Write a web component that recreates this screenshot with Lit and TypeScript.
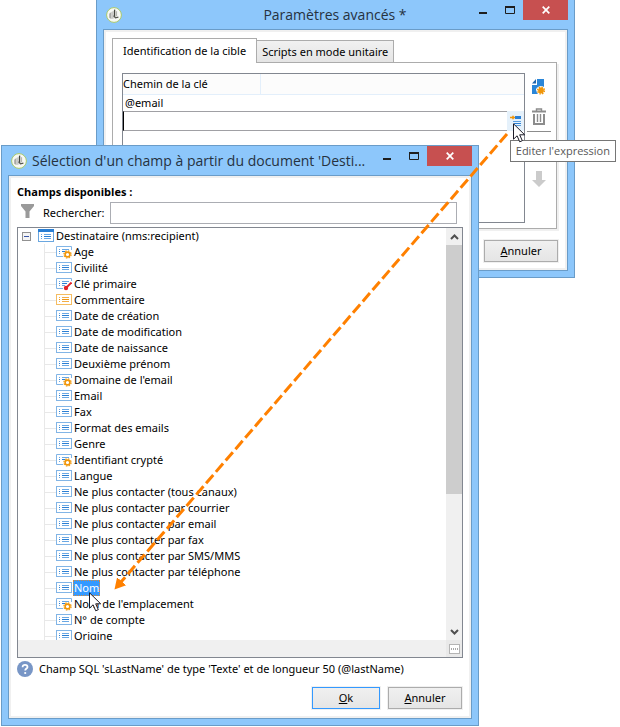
import { LitElement, html, css, svg, nothing } from "lit";
import { customElement, property } from "lit/decorators.js";
import { classMap } from "lit/directives/class-map.js";

type Kind = "field" | "computed" | "key" | "memo";

interface Field {
  label: string;
  kind?: Kind;
  selected?: boolean;
}

const FIELDS: Field[] = [
  { label: "Age", kind: "computed" },
  { label: "Civilité" },
  { label: "Clé primaire", kind: "key" },
  { label: "Commentaire", kind: "memo" },
  { label: "Date de création" },
  { label: "Date de modification" },
  { label: "Date de naissance" },
  { label: "Deuxième prénom" },
  { label: "Domaine de l'email", kind: "computed" },
  { label: "Email" },
  { label: "Fax" },
  { label: "Format des emails" },
  { label: "Genre" },
  { label: "Identifiant crypté", kind: "computed" },
  { label: "Langue" },
  { label: "Ne plus contacter (tous canaux)" },
  { label: "Ne plus contacter par courrier" },
  { label: "Ne plus contacter par email" },
  { label: "Ne plus contacter par fax" },
  { label: "Ne plus contacter par SMS/MMS" },
  { label: "Ne plus contacter par téléphone" },
  { label: "Nom", selected: true },
  { label: "Nom de l'emplacement", kind: "computed" },
  { label: "N° de compte" },
  { label: "Origine" },
];

const rows = (mid: string, side: string) => svg`
  <path d="M3 5.5h1M6 5.5h7M3 9.5h1M6 9.5h7" stroke=${side} fill="none"/>
  <path d="M3 7.5h1M6 7.5h7" stroke=${mid} fill="none"/>`;

function fieldIcon(kind: Kind = "field") {
  const memo = kind === "memo";
  const frame = memo ? "#f5bd62" : "#82b5e6";
  return html`<svg class="ico" width="16" height="16" viewBox="0 0 16 16" aria-hidden="true">
    ${kind === "computed"
      ? svg`<path d="M7 12.5H.5v-10h15V6" fill="none" stroke=${frame}/>
          <path d="M3 5.5h1M6 5.5h7M3 9.5h1" stroke="#6aa8e4" fill="none"/>
          <path d="M3 7.5h1M6 7.5h3" stroke="#2a7fd4" fill="none"/>
          <circle cx="11.5" cy="10.5" r="3.6" fill="none" stroke="#f0a020" stroke-width="1.3" stroke-dasharray="1.5 1.33"/>
          <circle cx="11.5" cy="10.5" r="2.4" fill="#fff" stroke="#f0960a" stroke-width="1.6"/>`
      : kind === "key"
      ? svg`<path d="M7 12.5H.5v-10h15V5" fill="none" stroke=${frame}/>
          <path d="M3 5.5h1M6 5.5h7M3 9.5h1M6 9.5h3" stroke="#6aa8e4" fill="none"/>
          <path d="M3 7.5h1M6 7.5h5" stroke="#2a7fd4" fill="none"/>
          <path d="M15.5 6.5 10 12" stroke="#e2252b" stroke-width="1.8"/>
          <circle cx="10" cy="12" r="2.2" fill="#e2252b"/>`
      : svg`<rect x=".5" y="2.5" width="15" height="10" fill="#fff" stroke=${frame}/>
          ${rows(memo ? "#ee9510" : "#2a7fd4", memo ? "#f4ae46" : "#6aa8e4")}`}
  </svg>`;
}

const rootIcon = html`<svg class="ico" width="16" height="16" viewBox="0 0 16 16" aria-hidden="true">
  <rect x=".5" y="1.5" width="15" height="12" fill="#fff" stroke="#6ba7e0"/>
  <path d="M0 2.5h16" stroke="#2a7fd4" stroke-width="3"/>
  <path d="M3 6.5h1M6 6.5h7M3 10.5h1M6 10.5h7" stroke="#6aa8e4"/>
  <path d="M3 8.5h1M6 8.5h7" stroke="#2a7fd4"/>
</svg>`;

const logo = html`<svg width="16" height="16" viewBox="0 0 16 16" aria-hidden="true">
  <circle cx="8" cy="8" r="7.4" fill="#f7f8f4" stroke="#a9c96b"/>
  <path d="M3.200 6.800 5.400 5v7L3.200 10.800z" fill="#a8a8a5"/>
  <path d="M5.400 5 7.800 3.800v7.600L5.400 12z" fill="#c9c9c6"/>
  <path d="M8.600 2.600v7.200" stroke="#44453f" stroke-width="1.300"/>
  <path d="M10.600 4.200v5" stroke="#b0b0ac"/>
  <path d="M7.600 8.600 9.400 10.800l3-.6" fill="none" stroke="#55564f" stroke-width="1.300"/>
</svg>`;

const pointer = html`<svg width="13" height="20" viewBox="0 0 13 20" aria-hidden="true">
  <path d="M.5.8v15.4l3.6-3.4 2.6 6 2.6-1.1-2.6-5.9h5z" fill="#fff" stroke="#1c1c28"/>
</svg>`;

@customElement("dialog-window")
export class DialogWindow extends LitElement {
  @property() heading = "";
  @property({ type: Boolean, reflect: true }) centered = false;

  static styles = css`
    :host {
      display: flex;
      flex-direction: column;
      box-sizing: border-box;
      padding: 0 6px 6px;
      background: #8dc7fb;
      border: 1px solid #6a9cc8;
      color: #000;
    }
    header {
      display: flex;
      flex: none;
      align-items: center;
      height: 29px;
      padding-left: 3px;
      gap: 5px;
    }
    header > svg {
      flex: none;
    }
    h1 {
      flex: 1;
      min-width: 0;
      margin: 0;
      font-family: "Open Sans", "Noto Sans", sans-serif;
      font-size: 14px;
      font-weight: 400;
      line-height: 24px;
      color: #26323f;
      white-space: nowrap;
      overflow: hidden;
      text-overflow: ellipsis;
    }
    :host([centered]) h1 {
      text-align: center;
      padding-left: 79px;
    }
    .controls {
      display: flex;
      flex: none;
      align-self: flex-start;
    }
    .controls button {
      display: grid;
      place-items: center;
      width: 27px;
      height: 20px;
      padding: 0;
      border: 0;
      background: none;
    }
    .controls .close {
      width: 45px;
      background: #c75050;
    }
    .client {
      display: flex;
      flex: 1;
      flex-direction: column;
      min-height: 0;
      background: #fff;
      border: 2px solid #f0f0f0;
      outline: 1px solid #6a9cc8;
      margin: 1px;
    }
  `;

  render() {
    return html`
      <header>
        ${logo}
        <h1>${this.heading}</h1>
        <div class="controls">
          <button aria-label="Réduire">
            <svg width="10" height="8" viewBox="0 0 10 8"><path d="M1 7h8" stroke="#1e1e1e" stroke-width="2" /></svg>
          </button>
          <button aria-label="Agrandir">
            <svg width="10" height="8" viewBox="0 0 10 8">
              <path d="M.5 1v6.5h9V1" fill="none" stroke="#1e1e1e" /><path d="M0 1h10" stroke="#1e1e1e" stroke-width="2" />
            </svg>
          </button>
          <button class="close" aria-label="Fermer">
            <svg width="8" height="8" viewBox="0 0 8 8"><path d="M.7.7 7.3 7.3M7.3.7.7 7.3" stroke="#fff" stroke-width="1.7" /></svg>
          </button>
        </div>
      </header>
      <div class="client"><slot></slot></div>
    `;
  }
}

@customElement("app-root")
export class AppRoot extends LitElement {
  static styles = css`
    :host {
      display: block;
      position: relative;
      min-height: 100vh;
      overflow: hidden;
      background: #fff;
      font: 11px/16px "Noto Sans", "Open Sans", sans-serif;
      color: #000;
    }
    button,
    input {
      font: inherit;
      color: inherit;
      box-sizing: border-box;
      margin: 0;
    }
    .back {
      position: absolute;
      top: 0;
      left: 96px;
      right: 45px;
      border-top: 0;
    }
    .front {
      position: absolute;
      top: 145px;
      left: 1px;
      right: 141px;
      bottom: 1px;
    }
    .settings {
      display: flex;
      flex-direction: column;
      padding: 6px 8px 6px 6px;
    }
    .tabs {
      display: flex;
      align-items: flex-end;
    }
    .tab {
      height: 22px;
      padding: 0 5px;
      white-space: nowrap;
      border: 1px solid #acacac;
      border-left: 0;
      border-bottom: 0;
      background: linear-gradient(#f1f1f1, #e5e5e5);
    }
    .tab.active {
      height: 25px;
      margin-bottom: -1px;
      padding: 0 10px;
      border-left: 1px solid #acacac;
      background: #fff;
      z-index: 1;
    }
    .panel {
      display: flex;
      gap: 2px;
      padding: 10px 5px 5px 9px;
      border: 1px solid #acacac;
      box-shadow: 2px 2px #f0f0f0;
    }
    .grid {
      flex: 1;
      height: 148px;
      border: 1px solid #828790;
    }
    table {
      width: 100%;
      border-collapse: collapse;
      table-layout: fixed;
    }
    th,
    td {
      padding: 0 2px;
      text-align: left;
      font-weight: 400;
    }
    th {
      height: 20px;
      padding: 0;
      background: #fcfcfc;
      border-bottom: 1px solid #e3effb;
    }
    th:first-child {
      width: 137px;
      border-right: 1px solid #e3effb;
    }
    td {
      height: 16px;
    }
    td.edit {
      padding: 0;
    }
    .cell {
      display: flex;
      height: 20px;
    }
    .cell input {
      flex: 1;
      min-width: 0;
      height: 20px;
      padding: 0 3px;
      border: 1px solid #a0a0a4;
      border-left: 1px solid #000;
      border-right: 0;
      outline: 0;
      background: #fff;
    }
    .cell button {
      display: grid;
      place-items: center;
      width: 17px;
      height: 20px;
      padding: 0;
      border: 0;
      background: #e5f1fb;
    }
    .tools {
      display: flex;
      flex-direction: column;
      align-items: center;
      width: 24px;
      padding-top: 5px;
    }
    .tools button {
      display: grid;
      place-items: center;
      width: 24px;
      height: 18px;
      margin-bottom: 11px;
      padding: 0;
      border: 0;
      background: none;
    }
    .tools hr {
      width: 24px;
      margin: -5px 0 38px;
      border: 0;
      border-top: 1px solid #8c8c8c;
    }
    .actions {
      display: flex;
      flex: none;
      justify-content: flex-end;
      gap: 8px;
      padding-top: 11px;
    }
    .back .actions {
      margin-right: -1px;
    }
    .push {
      width: 74px;
      height: 22px;
      padding: 0;
      border: 1px solid #acacac;
      outline: 1px solid #f0f0f0;
      background: linear-gradient(#f0f0f0, #e5e5e5);
    }
    .push.default {
      width: 68px;
      border-color: #3399ff;
    }
    .picker {
      display: flex;
      flex: 1;
      flex-direction: column;
      min-height: 0;
      padding: 6px 6px 7px;
    }
    h2 {
      margin: 0 0 2px;
      font-family: "Open Sans", "Noto Sans", sans-serif;
      font-size: 11px;
      line-height: 16px;
      font-weight: 700;
    }
    .search {
      display: flex;
      align-items: center;
      gap: 6px;
      padding-right: 6px;
      margin-bottom: 3px;
    }
    .search svg {
      margin: 0 3px 4px 4px;
    }
    .search input {
      flex: 1;
      min-width: 0;
      height: 22px;
      border: 1px solid #abadb3;
      background: #fff;
      outline: 0;
    }
    .tree-box {
      display: grid;
      flex: 1;
      grid-template-columns: 1fr 16px;
      grid-template-rows: 1fr 17px;
      min-height: 0;
      border: 1px solid #828790;
    }
    .tree-view {
      min-height: 0;
      overflow: hidden;
    }
    ul {
      margin: 0;
      padding: 0;
      list-style: none;
    }
    .node {
      display: flex;
      align-items: center;
      height: 16px;
      white-space: nowrap;
    }
    .ico {
      flex: none;
    }
    .root {
      padding-left: 4px;
      gap: 2px;
    }
    .root .ico {
      margin-left: 5px;
    }
    .children {
      margin-left: 26px;
      border-left: 1px solid #e8e8e8;
    }
    .children .node::before {
      content: "";
      width: 11px;
      border-top: 1px solid #e8e8e8;
    }
    .name {
      margin-left: 1px;
      padding: 0 1px;
      line-height: 16px;
    }
    .selected .name {
      background: #3399ff;
      color: #fff;
      outline: 1px dotted #d98a3a;
      outline-offset: -1px;
    }
    .scroll {
      display: flex;
      flex-direction: column;
      align-items: center;
      justify-content: space-between;
      min-height: 0;
      background: #f0f0f0;
    }
    .scroll svg {
      flex: none;
      margin: 6px 0 5px;
    }
    .track {
      flex: 1;
      width: 100%;
    }
    .thumb {
      height: 66%;
      background: #cdcdcd;
    }
    .foot {
      background: #f0f0f0;
    }
    .corner {
      display: grid;
      place-items: center;
      background: #e9e9e9;
    }
    .hint {
      display: flex;
      align-items: center;
      gap: 6px;
      margin: 3px 0 0;
      white-space: nowrap;
    }
    .front .actions {
      padding-top: 10px;
      padding-right: 1px;
    }
    .arrow {
      position: absolute;
      top: 134px;
      left: 121px;
      width: calc(100% - 234px);
      height: 448px;
      overflow: visible;
      pointer-events: none;
    }
    .tooltip {
      position: absolute;
      top: 140px;
      right: 4px;
      padding: 2px 5px;
      border: 1px solid #767676;
      background: #fff;
      color: #575757;
      font-family: "Open Sans", "Noto Sans", sans-serif;
      white-space: nowrap;
    }
    .pointer {
      position: absolute;
      height: 20px;
      pointer-events: none;
    }
    .at-button {
      top: 123px;
      right: 94px;
    }
    .at-name {
      top: 592px;
      left: 89px;
    }
  `;

  private renderSettings() {
    return html`<dialog-window class="back" heading="Paramètres avancés *" centered>
      <div class="settings">
        <div class="tabs" role="tablist">
          <button class="tab active" role="tab" aria-selected="true">Identification de la cible</button>
          <button class="tab" role="tab" aria-selected="false">Scripts en mode unitaire</button>
        </div>
        <div class="panel" role="tabpanel">
          <div class="grid">
            <table>
              <thead>
                <tr><th>Chemin de la clé</th><th></th></tr>
              </thead>
              <tbody>
                <tr><td colspan="2">@email</td></tr>
                <tr>
                  <td class="edit" colspan="2">
                    <div class="cell">
                      <input type="text" aria-label="Chemin de la clé" />
                      <button aria-label="Editer l'expression">
                        <svg width="12" height="12" viewBox="0 0 12 12">
                          <path d="M5 2.500h6" stroke="#2a7fd4" stroke-width="3" />
                          <path d="M3 6.500h8M4 10.500h7" stroke="#5a9fe0" />
                          <path d="M4 8.500h7" stroke="#2a7fd4" />
                          <path d="M0 2.500h5M3 .8v3.400" stroke="#f0960a" stroke-width="1.600" />
                        </svg>
                      </button>
                    </div>
                  </td>
                </tr>
              </tbody>
            </table>
          </div>
          <div class="tools">
            <button aria-label="Ajouter">
              <svg width="14" height="16" viewBox="0 0 14 16">
                <path d="M5 0h7v15H0V6h5z" fill="#2a86d8" />
                <path d="M4 0v4.500H0z" fill="#1f65ad" />
                <path d="M4 10.500h2" stroke="#fff" stroke-width="2" />
                <circle cx="9" cy="11.500" r="4.600" fill="#fff" />
                <circle cx="9" cy="11.500" r="3.400" fill="none" stroke="#f0960a" stroke-width="1.400" stroke-dasharray="1.500 1.170" />
                <circle cx="9" cy="11.500" r="2.900" fill="#f0960a" />
              </svg>
            </button>
            <button aria-label="Supprimer">
              <svg width="14" height="17" viewBox="0 0 14 17" fill="none" stroke="#8c8c8c">
                <path d="M4.500 3V1h5v2" stroke-width="1.400" />
                <path d="M0 3.500h14" stroke-width="2" />
                <path d="M2 6v10h10V6" stroke-width="2" />
                <path d="M5.500 6v8M8.500 6v8" stroke-width="1.400" />
              </svg>
            </button>
            <hr />
            <button aria-label="Descendre">
              <svg width="14" height="16" viewBox="0 0 14 16"><path d="M4 0h6v9h4l-7 7-7-7h4z" fill="#cbcbcb" /></svg>
            </button>
          </div>
        </div>
        <div class="actions"><button class="push"><u>A</u>nnuler</button></div>
      </div>
    </dialog-window>`;
  }

  private renderPicker() {
    return html`<dialog-window class="front" heading="Sélection d'un champ à partir du document 'Desti...">
      <div class="picker">
        <h2>Champs disponibles :</h2>
        <div class="search">
          <svg width="13" height="15" viewBox="0 0 13 15" aria-hidden="true"><path d="M0 0h13v2L8.500 7.500V14h-4V7.500L0 2z" fill="#9a9a9a" /></svg>
          <label for="search">Rechercher:</label>
          <input id="search" type="text" />
        </div>
        <div class="tree-box">
          <div class="tree-view">
            <ul role="tree">
              <li role="treeitem" aria-expanded="true">
                <div class="node root">
                  <svg width="9" height="9" viewBox="0 0 9 9" aria-hidden="true">
                    <rect x=".5" y=".5" width="8" height="8" fill="#f4f4f4" stroke="#919191" />
                    <path d="M2 4.500h5" stroke="#3a55a5" />
                  </svg>
                  ${rootIcon}<span>Destinataire (nms:recipient)</span>
                </div>
                <ul class="children" role="group">
                  ${FIELDS.map(
                    (f) => html`<li
                      role="treeitem"
                      aria-selected=${f.selected ? "true" : nothing}
                      class=${classMap({ node: true, selected: !!f.selected })}
                    >${fieldIcon(f.kind)}<span class="name">${f.label}</span></li>`
                  )}
                </ul>
              </li>
            </ul>
          </div>
          <div class="scroll">
            <svg width="9" height="6" viewBox="0 0 9 6"><path d="M1 5l3.500-3.500L8 5" fill="none" stroke="#505050" stroke-width="2" /></svg>
            <div class="track"><div class="thumb"></div></div>
            <svg width="9" height="6" viewBox="0 0 9 6"><path d="M1 1l3.500 3.500L8 1" fill="none" stroke="#505050" stroke-width="2" /></svg>
          </div>
          <div class="foot"></div>
          <div class="corner">
            <svg width="11" height="10" viewBox="0 0 11 10">
              <rect x=".5" y=".5" width="10" height="9" fill="#fff" stroke="#b4b4b4" />
              <path d="M2 5h7" stroke="#8c8c8c" stroke-width="1.500" stroke-dasharray="1 1" />
            </svg>
          </div>
        </div>
        <p class="hint">
          <svg width="16" height="16" viewBox="0 0 16 16" role="img" aria-label="Aide">
            <circle cx="8" cy="8" r="8" fill="#7896c6" />
            <path d="M5.600 6.200C5.600 4.600 6.600 3.800 8 3.800s2.500.8 2.500 2.100C10.500 7.500 8.200 7.600 8.200 9.600" fill="none" stroke="#fff" stroke-width="1.800" />
            <circle cx="8.200" cy="12" r="1.100" fill="#fff" />
          </svg>
          <span>Champ SQL 'sLastName' de type 'Texte' et de longueur 50 (@lastName)</span>
        </p>
        <div class="actions">
          <button class="push default"><u>O</u>k</button>
          <button class="push"><u>A</u>nnuler</button>
        </div>
      </div>
    </dialog-window>`;
  }

  render() {
    return html`
      ${this.renderSettings()} ${this.renderPicker()}
      <svg class="arrow" aria-hidden="true">
        <defs>
          <marker id="head" markerUnits="userSpaceOnUse" markerWidth="12" markerHeight="14" refX="1" refY="7" orient="auto">
            <path d="M0 1l11 6-11 6z" fill="#ff8000" />
          </marker>
        </defs>
        <line x1="100%" y1="0" x2="0" y2="100%" stroke="#ff8000" stroke-width="3" stroke-dasharray="11 4" marker-end="url(#head)" />
      </svg>
      <div class="tooltip" role="tooltip">Editer l'expression</div>
      <div class="pointer at-button">${pointer}</div>
      <div class="pointer at-name">${pointer}</div>
    `;
  }
}
